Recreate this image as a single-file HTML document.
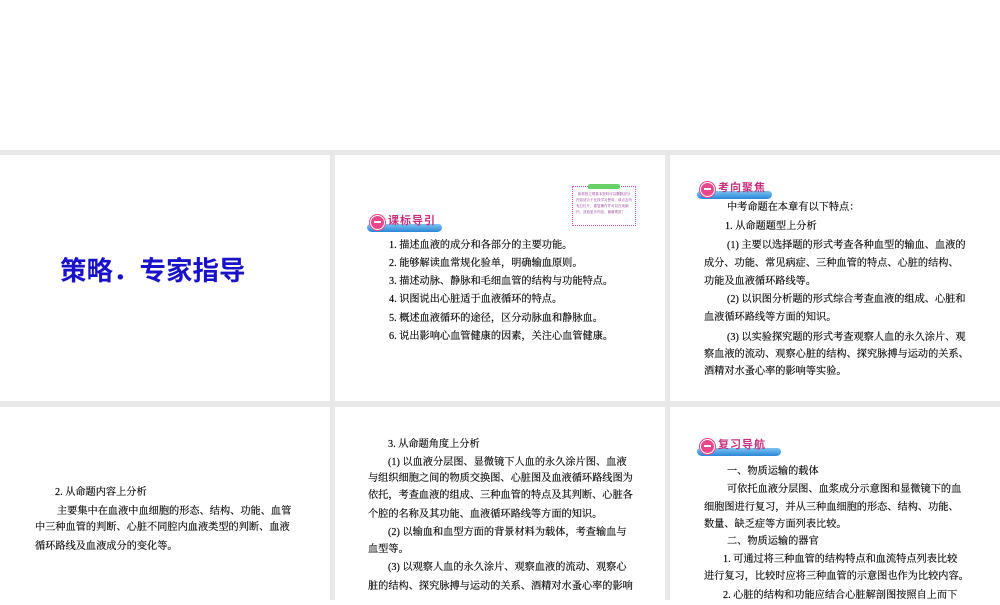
<!DOCTYPE html>
<html><head><meta charset="utf-8"><style>
body{margin:0;width:1000px;height:600px;overflow:hidden;background:#fff;position:relative;font-family:"Liberation Serif","Noto Serif CJK SC",serif;}
.band{position:absolute;left:0;top:150px;width:1000px;height:450px;background:#e8e8e8;}
.s{position:absolute;background:#fff;}
.l{position:absolute;font-size:10.2px;line-height:18px;color:#000;white-space:nowrap;-webkit-text-stroke:0.15px #000;}
.b{position:absolute;height:20px;}
.b .sw{position:absolute;left:0;bottom:0;height:8px;border-radius:6px 6px 8px 8px;background:linear-gradient(#7cc4f0,#2a86d8);}
.b .c{position:absolute;left:3px;bottom:2px;width:13px;height:13px;border-radius:50%;background:#e8488a;border:1.5px solid #fff;box-shadow:0 0 0 1px #e8488a;}
.b .c:after{content:"";position:absolute;left:3px;top:5px;width:7px;height:2px;background:#fff;}
.b .t{position:absolute;left:21px;bottom:5px;font-family:"Liberation Sans","Noto Sans CJK SC",sans-serif;font-weight:bold;font-size:11px;color:#c8307c;letter-spacing:1px;line-height:12px;}
</style></head><body>
<div class="band"></div>
<div class="s" style="left:0;top:155px;width:330px;height:246px"></div>
<div class="s" style="left:335px;top:155px;width:330px;height:246px"></div>
<div class="s" style="left:670px;top:155px;width:330px;height:246px"></div>
<div class="s" style="left:0;top:407px;width:330px;height:193px"></div>
<div class="s" style="left:335px;top:407px;width:330px;height:193px"></div>
<div class="s" style="left:670px;top:407px;width:330px;height:193px"></div>

<div style="position:absolute;left:60px;top:254px;font-family:'Liberation Sans','Noto Sans CJK SC',sans-serif;font-weight:bold;font-size:26.5px;color:#1a12c8;line-height:34px;white-space:nowrap">策略．专家指导</div>

<div class="b" style="left:367px;top:212px;width:75px"><div class="sw" style="width:75px"></div><div class="c"></div><div class="t">课标导引</div></div>
<div style="position:absolute;left:572px;top:186px;width:62px;height:38px;border:1px dotted #d050c0;"><div style="position:absolute;left:15px;top:-3px;width:32px;height:5px;background:#6ad06a;border-radius:2px"></div><div style="position:absolute;left:3px;top:4px;width:56px;font-size:3.5px;line-height:6px;color:#8a2a8a">&nbsp;&nbsp;如需独立观看本资料可以删除部分内容适合于在线学习使用，请点击所有幻灯片，重复操作并可以在视频内，获取更多内容，谢谢观赏！</div></div>
<div class="l" style="left:389px;top:237px">1. 描述血液的成分和各部分的主要功能。</div>
<div class="l" style="left:389px;top:255px">2. 能够解读血常规化验单，明确输血原则。</div>
<div class="l" style="left:389px;top:273px">3. 描述动脉、静脉和毛细血管的结构与功能特点。</div>
<div class="l" style="left:389px;top:291px">4. 识图说出心脏适于血液循环的特点。</div>
<div class="l" style="left:389px;top:310px">5. 概述血液循环的途径，区分动脉血和静脉血。</div>
<div class="l" style="left:389px;top:328px">6. 说出影响心血管健康的因素，关注心血管健康。</div>

<div class="b" style="left:697px;top:179px;width:75px"><div class="sw" style="width:75px"></div><div class="c"></div><div class="t">考向聚焦</div></div>
<div class="l" style="left:727px;top:199px">中考命题在本章有以下特点：</div>
<div class="l" style="left:725px;top:218px">1. 从命题题型上分析</div>
<div class="l" style="left:727px;top:237px">(1) 主要以选择题的形式考查各种血型的输血、血液的</div>
<div class="l" style="left:704px;top:255px">成分、功能、常见病症、三种血管的特点、心脏的结构、</div>
<div class="l" style="left:704px;top:273px">功能及血液循环路线等。</div>
<div class="l" style="left:727px;top:291px">(2) 以识图分析题的形式综合考查血液的组成、心脏和</div>
<div class="l" style="left:704px;top:309px">血液循环路线等方面的知识。</div>
<div class="l" style="left:727px;top:329px">(3) 以实验探究题的形式考查观察人血的永久涂片、观</div>
<div class="l" style="left:704px;top:346px">察血液的流动、观察心脏的结构、探究脉搏与运动的关系、</div>
<div class="l" style="left:704px;top:363px">酒精对水蚤心率的影响等实验。</div>

<div class="l" style="left:55px;top:484px">2. 从命题内容上分析</div>
<div class="l" style="left:57px;top:503px">主要集中在血液中血细胞的形态、结构、功能、血管</div>
<div class="l" style="left:35px;top:519px">中三种血管的判断、心脏不同腔内血液类型的判断、血液</div>
<div class="l" style="left:35px;top:538px">循环路线及血液成分的变化等。</div>

<div class="l" style="left:388px;top:436px">3. 从命题角度上分析</div>
<div class="l" style="left:388px;top:454px">(1) 以血液分层图、显微镜下人血的永久涂片图、血液</div>
<div class="l" style="left:368px;top:470px">与组织细胞之间的物质交换图、心脏图及血液循环路线图为</div>
<div class="l" style="left:368px;top:487px">依托，考查血液的组成、三种血管的特点及其判断、心脏各</div>
<div class="l" style="left:368px;top:506px">个腔的名称及其功能、血液循环路线等方面的知识。</div>
<div class="l" style="left:388px;top:524px">(2) 以输血和血型方面的背景材料为载体，考查输血与</div>
<div class="l" style="left:368px;top:541px">血型等。</div>
<div class="l" style="left:388px;top:559px">(3) 以观察人血的永久涂片、观察血液的流动、观察心</div>
<div class="l" style="left:368px;top:578px">脏的结构、探究脉搏与运动的关系、酒精对水蚤心率的影响</div>

<div class="b" style="left:697px;top:436px;width:84px"><div class="sw" style="width:84px"></div><div class="c"></div><div class="t">复习导航</div></div>
<div class="l" style="left:727px;top:463px">一、物质运输的载体</div>
<div class="l" style="left:727px;top:481px">可依托血液分层图、血浆成分示意图和显微镜下的血</div>
<div class="l" style="left:704px;top:499px">细胞图进行复习，并从三种血细胞的形态、结构、功能、</div>
<div class="l" style="left:704px;top:516px">数量、缺乏症等方面列表比较。</div>
<div class="l" style="left:727px;top:533px">二、物质运输的器官</div>
<div class="l" style="left:723px;top:551px">1. 可通过将三种血管的结构特点和血流特点列表比较</div>
<div class="l" style="left:704px;top:568px">进行复习，比较时应将三种血管的示意图也作为比较内容。</div>
<div class="l" style="left:723px;top:587px">2. 心脏的结构和功能应结合心脏解剖图按照自上而下</div>
</body></html>
